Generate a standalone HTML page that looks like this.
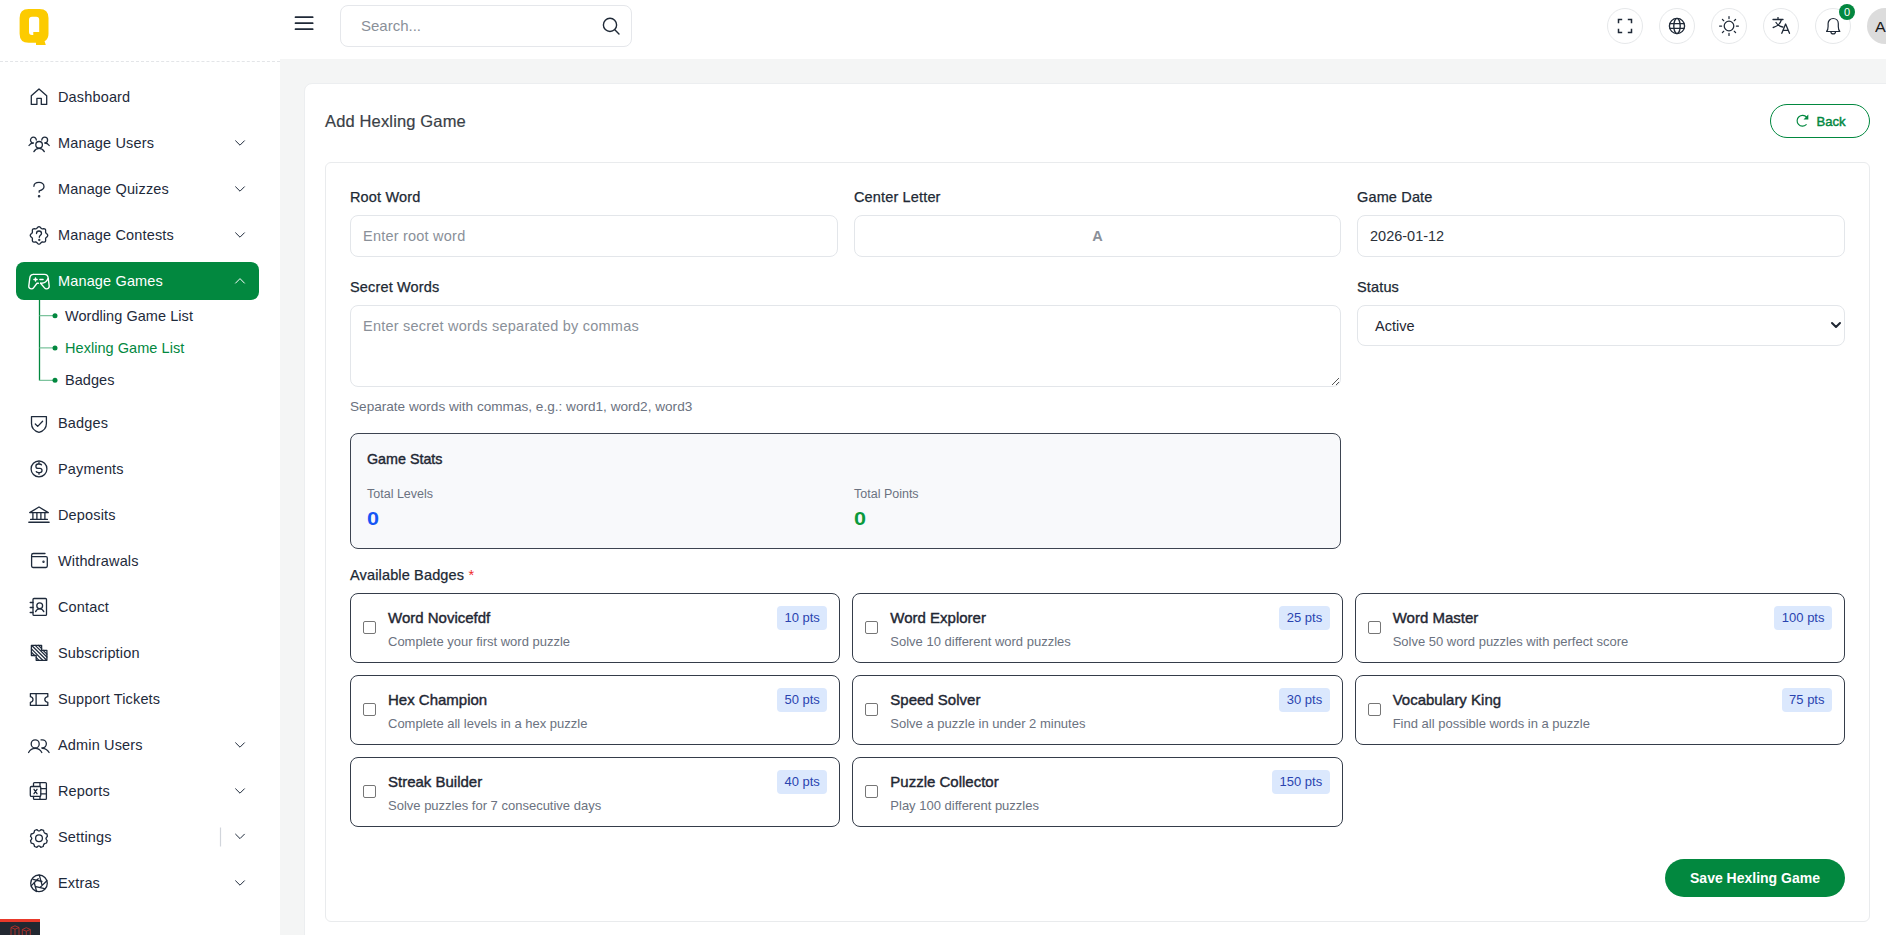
<!DOCTYPE html>
<html><head><meta charset="utf-8">
<style>
*{box-sizing:border-box;margin:0;padding:0}
html,body{width:1886px;height:935px;overflow:hidden;background:#f4f5f5;font-family:"Liberation Sans",sans-serif;color:#1f2937}
.abs{position:absolute}
#header{position:absolute;left:0;top:0;width:1886px;height:59px;background:#fff}
#sidebar{position:absolute;left:0;top:0;width:280px;height:935px;background:#fff}
#logoarea{position:absolute;left:0;top:0;width:280px;height:62px;border-bottom:1px dashed #e3e5e8}
.st{position:absolute;left:58px;font-size:14.5px;line-height:17px;white-space:nowrap;letter-spacing:0.15px}
.sb{left:65px;letter-spacing:0.05px}
.hicon{position:absolute;top:8px;width:36px;height:36px;border:1px solid #e6e8ea;border-radius:50%}
.hicon svg{position:absolute;left:50%;top:50%;transform:translate(-50%,-50%)}
#card{position:absolute;left:304px;top:83px;width:1600px;height:900px;background:#fff;border:1px solid #eceef0;border-radius:8px}
#inner{position:absolute;left:325px;top:162px;width:1545px;height:760px;border:1px solid #e9ebed;border-radius:6px;background:#fff}
.lbl{position:absolute;font-size:14.5px;color:#212934;white-space:nowrap;line-height:17px;letter-spacing:0.15px;-webkit-text-stroke:0.25px #212934}
.inp{position:absolute;height:42px;border:1px solid #e3e6ea;border-radius:8px;background:#fff;font-size:14.5px;line-height:40px;padding-left:12px;white-space:nowrap}
.ph{color:#8a9099;letter-spacing:0.22px}
.badge{position:absolute;width:490.33px;height:70px;border:1.5px solid #353d4a;border-radius:8px;background:#fff}
.badge .cb{position:absolute;left:12px;top:27px;width:13px;height:13px;border:1px solid #767676;border-radius:2px;background:#fff}
.badge .bt{position:absolute;left:37px;top:15px;font-size:15px;color:#1f2733;white-space:nowrap;line-height:18px;-webkit-text-stroke:0.4px #1f2733}
.badge .bd{position:absolute;left:37px;top:40px;font-size:13px;color:#6b7280;white-space:nowrap;line-height:16px}
.badge .pts{position:absolute;right:12px;top:12px;height:24px;padding:0 7.5px;border-radius:4px;background:#dbe8fd;color:#2a44b0;font-size:13px;line-height:24px;white-space:nowrap}
</style></head><body>
<div id="header">

<svg class="abs" style="left:290px;top:10px" width="28" height="26" viewBox="290 10 28 26"><g stroke="#1f2937" stroke-width="1.7" stroke-linecap="round"><path d="M295.5 17.2H312.7M295.5 23.2H312.7M295.5 29.2H312.7"/></g></svg>
<div class="abs" style="left:340px;top:5px;width:292px;height:42px;border:1px solid #e5e7eb;border-radius:8px;background:#fff"></div>
<div class="abs" style="left:361px;top:17px;font-size:15px;line-height:18px;color:#8a9099">Search...</div>
<svg class="abs" style="left:598px;top:13px" width="26" height="26" viewBox="598 13 26 26"><g fill="none" stroke="#1f2937" stroke-width="1.4" stroke-linecap="round"><circle cx="610" cy="24.9" r="6.6"/><path d="M614.8 29.8L619 34"/></g></svg>
<div class="hicon" style="left:1607px"><svg width="16" height="16" viewBox="0 0 16 16"><g fill="none" stroke="#1f2937" stroke-width="1.5"><path d="M1.5 5.2V1.5H5.2M10.8 1.5H14.5V5.2M14.5 10.8V14.5H10.8M5.2 14.5H1.5V10.8"/></g></svg></div>
<div class="hicon" style="left:1659px"><svg width="18" height="18" viewBox="0 0 18 18"><g fill="none" stroke="#1f2937" stroke-width="1.35"><circle cx="9" cy="9" r="7.6"/><ellipse cx="9" cy="9" rx="3.2" ry="7.6"/><path d="M1.6 6.6H16.4M1.6 11.4H16.4"/></g></svg></div>
<div class="hicon" style="left:1711px"><svg width="22" height="22" viewBox="0 0 22 22"><g fill="none" stroke="#1f2937" stroke-width="1.25" stroke-linecap="round"><circle cx="11" cy="11" r="4.8"/><path d="M11 1.6V3.6M11 18.4V20.4M1.6 11H3.6M18.4 11H20.4M4.4 4.4L5.7 5.7M16.3 16.3L17.6 17.6M4.4 17.6L5.7 16.3M16.3 5.7L17.6 4.4"/></g></svg></div>
<div class="hicon" style="left:1763px"><svg width="20" height="18" viewBox="-1 0.5 20 18"><g fill="none" stroke="#1f2937" stroke-width="1.3" stroke-linecap="round" stroke-linejoin="round"><path d="M1 3H11M6 1V3M9.5 3C8.5 7 5 10 1.2 11M4 6C5.5 8.5 8 10 10.8 10.5M9.8 16.8L13.6 7.5L17.5 16.8M11 13.8H16.2"/></g></svg></div>
<div class="hicon" style="left:1815px"><svg width="18" height="18" viewBox="0 0 18 18"><g fill="none" stroke="#1f2937" stroke-width="1.2" stroke-linejoin="round"><path d="M2.6 14.5C3.7 13.3 4.1 11.6 4.1 9.5V6.6C4.1 3.7 6.3 1.5 9.2 1.5S14.3 3.7 14.3 6.6V9.5C14.3 11.6 14.7 13.3 15.8 14.5Z"/><path d="M6.9 14.7C6.9 16 7.9 16.9 9.2 16.9S11.5 16 11.5 14.7"/></g></svg></div>
<div class="abs" style="left:1839px;top:4px;width:16px;height:16px;border-radius:50%;background:#03873f;color:#fff;font-size:11px;line-height:16px;text-align:center">0</div>
<div class="abs" style="left:1867px;top:8px;width:36px;height:36px;border-radius:50%;background:#dcdcdc"></div>
<div class="abs" style="left:1874.5px;top:19px;font-size:14px;line-height:17px;color:#1a1a1a;white-space:nowrap;transform:scaleX(1.15);transform-origin:left">A.</div>
</div>
<div id="sidebar"><div id="logoarea"></div><svg class="abs" style="left:0;top:0" width="60" height="50" viewBox="0 0 60 50"><path fill="#fccb00" fill-rule="evenodd" d="M28.6 9H39.5Q48.5 9 48.5 18V33.7Q48.5 39 44.6 41.2L45.8 45H36V42.7H28.6Q19.6 42.7 19.6 33.7V18Q19.6 9 28.6 9ZM32 16.7H36.2Q39.2 16.7 39.2 19.7V32H33.3V35H32Q29 35 29 32V19.7Q29 16.7 32 16.7Z"/></svg><svg class="abs" style="left:0;top:0" width="280" height="935" viewBox="0 0 280 935">
<rect x="16" y="262" width="243" height="38" rx="8" fill="#02883f"/>
<g fill="none" stroke="#1e2a3b" stroke-width="1.3" stroke-linecap="round" stroke-linejoin="round">
<!-- chevrons -->
<path d="M235.6 140.8L240 145.2L244.4 140.8M235.6 186.8L240 191.2L244.4 186.8M235.6 232.8L240 237.2L244.4 232.8M235.6 742.8L240 747.2L244.4 742.8M235.6 788.8L240 793.2L244.4 788.8M235.6 834.2L240 838.6L244.4 834.2M235.6 880.8L240 885.2L244.4 880.8" stroke-width="1"/>
<!-- house -->
<path d="M39 88.9L31.3 95.8V104.4H36.9V98.3H41.3V104.4H46.7V95.8Z"/>
<!-- users three -->
<circle cx="39.1" cy="144.8" r="3.3"/>
<path d="M33.9 151.6C35 149.5 36.9 148.3 39.1 148.3S43.2 149.5 44.3 151.6"/>
<path d="M36.3 140.1A2.9 2.9 0 1 0 33.5 143C31.6 143.1 30 144 29 145.5"/>
<path d="M41.8 140.1A2.9 2.9 0 1 1 44.7 143C46.6 143.1 48.2 144 49.2 145.5"/>
<!-- question -->
<path d="M33.9 186.3C34 183.8 36.2 182.4 39 182.4C41.8 182.4 44 184.2 44 186.7C44 189.5 41.4 190.2 39.2 190.8V192.2"/>
<circle cx="39.1" cy="196.3" r="0.5" fill="#1e2a3b" stroke-width="1.6"/>
<!-- seal question -->
<path d="M47.75 235.40 L47.63 235.97 L47.30 236.49 L46.85 236.96 L46.37 237.37 L45.96 237.76 L45.70 238.17 L45.59 238.65 L45.60 239.21 L45.65 239.84 L45.64 240.50 L45.50 241.10 L45.19 241.59 L44.70 241.90 L44.10 242.04 L43.44 242.05 L42.81 242.00 L42.25 241.99 L41.77 242.10 L41.36 242.36 L40.97 242.77 L40.56 243.25 L40.09 243.70 L39.57 244.03 L39.00 244.15 L38.43 244.03 L37.91 243.70 L37.44 243.25 L37.03 242.77 L36.64 242.36 L36.23 242.10 L35.75 241.99 L35.19 242.00 L34.56 242.05 L33.90 242.04 L33.30 241.90 L32.81 241.59 L32.50 241.10 L32.36 240.50 L32.35 239.84 L32.40 239.21 L32.41 238.65 L32.30 238.17 L32.04 237.76 L31.63 237.37 L31.15 236.96 L30.70 236.49 L30.37 235.97 L30.25 235.40 L30.37 234.83 L30.70 234.31 L31.15 233.84 L31.63 233.43 L32.04 233.04 L32.30 232.63 L32.41 232.15 L32.40 231.59 L32.35 230.96 L32.36 230.30 L32.50 229.70 L32.81 229.21 L33.30 228.90 L33.90 228.76 L34.56 228.75 L35.19 228.80 L35.75 228.81 L36.23 228.70 L36.64 228.44 L37.03 228.03 L37.44 227.55 L37.91 227.10 L38.43 226.77 L39.00 226.65 L39.57 226.77 L40.09 227.10 L40.56 227.55 L40.97 228.03 L41.36 228.44 L41.77 228.70 L42.25 228.81 L42.81 228.80 L43.44 228.75 L44.10 228.76 L44.70 228.90 L45.19 229.21 L45.50 229.70 L45.64 230.30 L45.65 230.96 L45.60 231.59 L45.59 232.15 L45.70 232.63 L45.96 233.04 L46.37 233.43 L46.85 233.84 L47.30 234.31 L47.63 234.83Z"/>
<path d="M36.5 233.6C36.5 232 37.6 231 39 231S41.5 232 41.5 233.5C41.5 235.2 39.3 235.5 39.3 237.3"/>
<circle cx="39.3" cy="240" r="0.4" fill="#1e2a3b" stroke-width="1.5"/>
<!-- shield check -->
<path d="M31.5 416.6H46.4V423.5C46.4 428 43 431.2 39 432.3C35 431.2 31.5 428 31.5 423.5Z"/>
<path d="M35.3 424L37.7 426.4L42.6 421.3"/>
<!-- dollar circle -->
<circle cx="39" cy="468.9" r="7.9"/>
<path d="M41.5 464.9C41.2 464.3 40.4 464 39 464H38.2C36.8 464 35.9 465 35.9 466.2C35.9 467.4 36.8 468.4 38.2 468.4H39.8C41.2 468.4 42 469.3 42 470.5C42 471.7 41.2 472.6 39.8 472.6H38.8C37.5 472.6 36.6 472.2 36.3 471.6M39 462.5V464M39 472.6V474.2"/>
<!-- bank -->
<path d="M29.7 512.6L39 507L48.3 512.6Z"/>
<path d="M32.9 512.6V519.3M36.9 512.6V519.3M40.9 512.6V519.3M44.9 512.6V519.3M30.6 519.4H47.4"/>
<path d="M28.9 522.2H49" stroke-width="1.6"/>
<!-- wallet -->
<path d="M45 553.5H33.4Q31.6 553.5 31.6 555.3V566.1Q31.6 567.5 33 567.5H46Q47.3 567.5 47.3 566.1V558Q47.3 556.6 46 556.6H31.6"/>
<circle cx="43.5" cy="561.7" r="0.45" fill="#1e2a3b" stroke-width="1.5"/>
<!-- contact book -->
<rect x="33" y="598.5" width="13.5" height="16.9" rx="1"/>
<path d="M30.2 602.5H33M30.2 607.5H33M30.2 612.5H33"/>
<circle cx="39.7" cy="605.8" r="2.9"/>
<path d="M35.6 611.6C36.4 610 38 608.9 39.7 608.9S43 610 43.8 611.6"/>
<!-- subscription hatched -->
<path d="M31.4 645.3H41.6V650.3H46.9V660.3H36.2V655.5H31.4Z"/>
<path d="M32 645.8L46.4 660M35.2 645.3L46.9 657M31.4 648.9L42.5 660M38.3 645.3L41.6 648.5M43 650.3L46.9 654.1M31.4 652.2L34.6 655.5M36.2 657.3L38.9 660.3" stroke-width="1.2"/>
<!-- ticket -->
<path d="M30.4 693.6H47.8V696.7C46 697 44.8 697.9 44.8 699.5S46 702 47.8 702.3V705.4H30.4V702.3C32 702 33 700.9 33 699.5S32 697 30.4 696.7Z"/>
<path d="M36.1 693.8V705.2"/>
<!-- users two -->
<circle cx="35.2" cy="743.9" r="4"/>
<path d="M28.6 752.5C30 749.9 32.4 748.4 35.2 748.4S40.4 749.9 41.8 752.5"/>
<path d="M41.1 739.9C41.5 739.8 41.9 739.8 42.3 739.8A4 4 0 0 1 42.3 747.9C42.1 747.9 41.9 747.9 41.8 747.9"/>
<path d="M42.4 748.3C45.2 748.3 47.6 749.9 49.1 752.5"/>
<!-- reports -->
<path d="M33.5 786.4V783.6Q33.5 782.6 34.5 782.6H45.4Q46.4 782.6 46.4 783.6V798.4Q46.4 799.4 45.4 799.4H34.5Q33.5 799.4 33.5 798.4V796.4"/>
<rect x="30.3" y="786.5" width="10.5" height="9.9" rx="1.2"/>
<path d="M40 782.8V786.4M40 796.4V799.2M40.8 788.7H46.2M40.8 793.8H46.2M34 789.3L37 793.7M37 789.3L34 793.7"/>
<!-- gear -->
<path d="M36.8 829.6L37.9 830.5C38.6 831 39.4 831 40.1 830.5L41.2 829.6L43.6 830.4L43.9 831.9C44.1 832.7 44.6 833.3 45.4 833.5L46.9 833.9L47.4 836.4L46.4 837.5C45.9 838.1 45.9 839 46.4 839.6L47.2 840.6L46.5 843L45 843.5C44.2 843.7 43.6 844.3 43.5 845.1L43.2 846.5L40.8 847.3L39.8 846.3C39.3 845.8 38.4 845.8 37.9 846.3L36.9 847.3L34.5 846.5L34.2 845C34 844.2 33.4 843.6 32.6 843.4L31.2 843L30.5 840.6L31.4 839.5C31.9 838.9 31.9 838 31.4 837.4L30.5 836.4L31.2 834L32.7 833.6C33.5 833.4 34.1 832.8 34.3 832L34.5 830.5Z"/>
<circle cx="39" cy="838.3" r="3.4"/>
<!-- aperture -->
<circle cx="39" cy="883.3" r="8.3"/>
<path d="M39.3 875.1L41.9 884.6M46.9 880.7L39.9 887.6M44.5 888.6L35.9 886.6M36.6 891.5L34.2 882.5M31.1 885.9L38.2 878.7M33.1 879.4L41.9 881.5"/>
</g>
<!-- gamepad white -->
<path d="M235.6 283.1L240 278.6L244.4 283.1" fill="none" stroke="#fff" stroke-width="1" stroke-linecap="round" stroke-linejoin="round"/>
<g fill="none" stroke="#fff" stroke-width="1.4" stroke-linecap="round" stroke-linejoin="round">
<path d="M33.5 274.4H44.5C46.6 274.4 47.9 275.9 48.2 278L49.2 286C49.4 287.7 48.2 288.9 46.6 288.9C45.6 288.9 44.9 288.4 44.3 287.6L40.6 283.3"/>
<path d="M38.4 283.3H37L33.7 287.6C33.2 288.4 32.4 288.9 31.4 288.9C29.8 288.9 28.6 287.7 28.8 286L29.8 278C30.1 275.9 31.4 274.4 33.5 274.4"/>
<path d="M40.6 283.3H41.5C44.3 283.3 46.9 281.6 48 278.6"/>
<path d="M33.9 279.5H37.1M35.5 277.9V281.1M39.9 279.5H43.1"/>
</g>
<!-- submenu tree -->
<path d="M39.5 300V380.5" stroke="#02883f" stroke-width="1.3"/>
<path d="M39.5 315.7H53M39.5 347.9H53M39.5 380.3H53" stroke="#7cc39d" stroke-width="1.3"/>
<circle cx="55" cy="315.7" r="2.5" fill="#02883f"/><circle cx="55" cy="347.9" r="2.5" fill="#02883f"/><circle cx="55" cy="380.3" r="2.5" fill="#02883f"/>
<path d="M220.5 827.5V846.5" stroke="#d1d5db" stroke-width="1.2"/>
</svg>
<div class="st" style="top:88.5px;color:#1e2a3b">Dashboard</div>
<div class="st" style="top:134.5px;color:#1e2a3b">Manage Users</div>
<div class="st" style="top:180.5px;color:#1e2a3b">Manage Quizzes</div>
<div class="st" style="top:226.5px;color:#1e2a3b">Manage Contests</div>
<div class="st" style="top:272.5px;color:#fff">Manage Games</div>
<div class="st" style="top:414.5px;color:#1e2a3b">Badges</div>
<div class="st" style="top:460.5px;color:#1e2a3b">Payments</div>
<div class="st" style="top:506.5px;color:#1e2a3b">Deposits</div>
<div class="st" style="top:552.5px;color:#1e2a3b">Withdrawals</div>
<div class="st" style="top:598.5px;color:#1e2a3b">Contact</div>
<div class="st" style="top:644.5px;color:#1e2a3b">Subscription</div>
<div class="st" style="top:690.5px;color:#1e2a3b">Support Tickets</div>
<div class="st" style="top:736.5px;color:#1e2a3b">Admin Users</div>
<div class="st" style="top:782.5px;color:#1e2a3b">Reports</div>
<div class="st" style="top:828.5px;color:#1e2a3b">Settings</div>
<div class="st" style="top:874.5px;color:#1e2a3b">Extras</div>
<div class="st sb" style="top:308.1px;color:#1e2a3b">Wordling Game List</div>
<div class="st sb" style="top:339.59999999999997px;color:#02883f">Hexling Game List</div>
<div class="st sb" style="top:372.0px;color:#1e2a3b">Badges</div>
<div class="abs" style="left:0;top:919px;width:40px;height:16px;background:#222831;border-top:3px solid #e8392a"></div><svg class="abs" style="left:0;top:922px" width="40" height="13" viewBox="0 922 40 13"><g fill="none" stroke="#c8322a" stroke-width="0.8"><path d="M11 935V927.5L15 925.8L19 927.5V935M11 927.5L15 929.2L19 927.5M15 929.2V935"/><path d="M22.3 935V929.5L26.3 927.7L30.3 929.5V935M22.3 929.5L26.3 931.2L30.3 929.5M26.3 931.2V935"/></g></svg></div>
<div id="card"></div>
<div class="abs" style="left:325px;top:111px;font-size:16.5px;line-height:20px;color:#3a3f47;white-space:nowrap;letter-spacing:0.15px;-webkit-text-stroke:0.2px #3a3f47">Add Hexling Game</div>
<div class="abs" style="left:1770px;top:104px;width:100px;height:34px;border:1.5px solid #02883f;border-radius:17px"></div>
<svg class="abs" style="left:1794px;top:113px" width="16" height="16" viewBox="1794 113 16 16"><path d="M1806.6 117.2A5.4 5.4 0 1 0 1806.2 124.7" fill="none" stroke="#02883f" stroke-width="1.15" stroke-linecap="round"/><path d="M1808.3 114.5V119.6H1803.5Z" fill="#02883f"/></svg>
<div class="abs" style="left:1816.5px;top:113.5px;font-size:13.1px;line-height:16px;color:#02883f;-webkit-text-stroke:0.45px #02883f;white-space:nowrap">Back</div>
<div id="inner"></div>
<div class="lbl" style="left:350px;top:188.5px">Root Word</div>
<div class="lbl" style="left:854px;top:188.5px">Center Letter</div>
<div class="lbl" style="left:1357px;top:188.5px">Game Date</div>
<div class="inp" style="left:350px;top:215px;width:488px"><span class="ph">Enter root word</span></div>
<div class="inp" style="left:854px;top:215px;width:487px;text-align:center;padding-left:0"><span class="ph" style="font-weight:bold">A</span></div>
<div class="inp" style="left:1357px;top:215px;width:488px;color:#2b313a">2026-01-12</div>
<div class="lbl" style="left:350px;top:278.5px">Secret Words</div>
<div class="lbl" style="left:1357px;top:278.5px">Status</div>
<div class="inp" style="left:350px;top:305px;width:991px;height:82px;line-height:17px;padding-top:12px"><span class="ph">Enter secret words separated by commas</span></div>
<svg class="abs" style="left:1330px;top:376px" width="10" height="10" viewBox="0 0 10 10"><path d="M9 2L2 9M9 6L6 9" stroke="#555" stroke-width="1"/></svg>
<div class="inp" style="left:1357px;top:305px;width:488px;height:41px;padding-left:17px;color:#1f2733">Active</div>
<svg class="abs" style="left:1830px;top:320px" width="12" height="10" viewBox="0 0 12 10"><path d="M2 3L6 7L10 3" fill="none" stroke="#1f2733" stroke-width="2" stroke-linecap="round" stroke-linejoin="round"/></svg>
<div class="abs" style="left:350px;top:399.3px;font-size:13.6px;line-height:16px;color:#6b7280;white-space:nowrap">Separate words with commas, e.g.: word1, word2, word3</div>
<div class="abs" style="left:350px;top:433px;width:991px;height:116px;border:1px solid #3d4451;border-radius:8px;background:#f8f9fb"></div>
<div class="abs" style="left:367px;top:450.5px;font-size:14.3px;line-height:17px;color:#1f2733;-webkit-text-stroke:0.4px #1f2733;white-space:nowrap">Game Stats</div>
<div class="abs" style="left:367px;top:487px;font-size:12.5px;line-height:15px;color:#6b7280;white-space:nowrap">Total Levels</div>
<div class="abs" style="left:367px;top:509px;font-size:18px;line-height:20px;font-weight:bold;color:#1656f5;white-space:nowrap;transform:scaleX(1.2);transform-origin:left">0</div>
<div class="abs" style="left:854px;top:487px;font-size:12.5px;line-height:15px;color:#6b7280;white-space:nowrap">Total Points</div>
<div class="abs" style="left:854px;top:509px;font-size:18px;line-height:20px;font-weight:bold;color:#0b9a3c;white-space:nowrap;transform:scaleX(1.2);transform-origin:left">0</div>
<div class="lbl" style="left:350px;top:566.5px">Available Badges <span style="color:#ef2b2b;-webkit-text-stroke:0 transparent">*</span></div>
<div class="badge" style="left:350.00px;top:593px"><div class="cb"></div><div class="bt">Word Novicefdf</div><div class="bd">Complete your first word puzzle</div><div class="pts">10 pts</div></div>
<div class="badge" style="left:852.33px;top:593px"><div class="cb"></div><div class="bt">Word Explorer</div><div class="bd">Solve 10 different word puzzles</div><div class="pts">25 pts</div></div>
<div class="badge" style="left:1354.66px;top:593px"><div class="cb"></div><div class="bt">Word Master</div><div class="bd">Solve 50 word puzzles with perfect score</div><div class="pts">100 pts</div></div>
<div class="badge" style="left:350.00px;top:675px"><div class="cb"></div><div class="bt">Hex Champion</div><div class="bd">Complete all levels in a hex puzzle</div><div class="pts">50 pts</div></div>
<div class="badge" style="left:852.33px;top:675px"><div class="cb"></div><div class="bt">Speed Solver</div><div class="bd">Solve a puzzle in under 2 minutes</div><div class="pts">30 pts</div></div>
<div class="badge" style="left:1354.66px;top:675px"><div class="cb"></div><div class="bt">Vocabulary King</div><div class="bd">Find all possible words in a puzzle</div><div class="pts">75 pts</div></div>
<div class="badge" style="left:350.00px;top:757px"><div class="cb"></div><div class="bt">Streak Builder</div><div class="bd">Solve puzzles for 7 consecutive days</div><div class="pts">40 pts</div></div>
<div class="badge" style="left:852.33px;top:757px"><div class="cb"></div><div class="bt">Puzzle Collector</div><div class="bd">Play 100 different puzzles</div><div class="pts">150 pts</div></div>
<div class="abs" style="left:1665px;top:859px;width:180px;height:38px;border-radius:19px;background:#02883f;color:#fff;font-weight:bold;font-size:14px;line-height:38px;text-align:center;white-space:nowrap">Save Hexling Game</div>
</body></html>
